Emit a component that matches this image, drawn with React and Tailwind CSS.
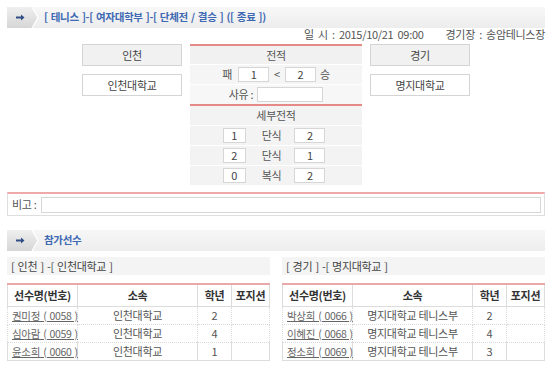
import React from "react";

const FONT = { fontFamily: '"Noto Sans CJK KR", "Noto Sans", sans-serif' };

function SectionHeader({ title }) {
  return (
    <div className="flex h-[21px] items-stretch bg-gradient-to-b from-[#f7f7f7] to-[#ededed]">
      <div className="flex w-[24px] items-center justify-center bg-gradient-to-b from-[#efefef] to-[#d6d6d6]">
        <svg width="9" height="7" viewBox="0 0 9 7" className="ml-[2px]">
          <path d="M0 2.5H5V0.5L8.5 3.5L5 6.5V4.5H0Z" fill="#2f4f86" />
        </svg>
      </div>
      <svg width="8" height="21" viewBox="0 0 8 21" className="block">
        <defs>
          <linearGradient id="tabg" x1="0" y1="0" x2="0" y2="1">
            <stop offset="0" stopColor="#efefef" />
            <stop offset="1" stopColor="#d6d6d6" />
          </linearGradient>
        </defs>
        <polygon points="0,0 1,0 7,10.5 1,21 0,21" fill="url(#tabg)" />
        <polyline points="1,0 7,10.5 1,21" fill="none" stroke="#ffffff" strokeWidth="1.2" />
      </svg>
      <span className="ml-[5px] self-center text-[10.5px] font-bold leading-none text-[#3d68b3] [word-spacing:1px]">
        {title}
      </span>
    </div>
  );
}

function Box({ children, className = "" }) {
  return (
    <span
      className={`inline-flex h-[15px] items-center justify-center border border-[#d6d6d6] bg-white text-[11px] leading-none text-[#444] ${className}`}
    >
      {children}
    </span>
  );
}

function PlayerTable({ rows }) {
  const last = rows.length - 1;
  const rowBorder = (idx) =>
    idx < last ? "border-b border-dotted border-b-[#dadada]" : "border-b border-b-[#dcdcdc]";
  return (
    <table className="mt-[8px] w-full table-fixed border-collapse text-[11px] text-[#555]">
      <colgroup>
        <col className="w-[70px]" />
        <col />
        <col className="w-[34px]" />
        <col className="w-[38px]" />
      </colgroup>
      <thead>
        <tr className="h-[22px] border-t-2 border-t-[#e9a9a9]">
          {["선수명(번호)", "소속", "학년", "포지션"].map((h, i) => (
            <th
              key={h}
              className={`whitespace-nowrap border-b border-r border-[#dcdcdc] p-0 font-bold leading-none text-[#333] ${i === 0 ? "border-l" : ""}`}
            >
              {h}
            </th>
          ))}
        </tr>
      </thead>
      <tbody>
        {rows.map((r, idx) => (
          <tr key={idx} className="h-[18px]">
            <td className={`whitespace-nowrap border-l border-r border-l-[#dcdcdc] border-r-[#dcdcdc] p-0 pl-[4px] leading-[17px] ${rowBorder(idx)}`}>
              <span className="text-[10.5px] text-[#666] underline [word-spacing:1px]">{r[0]}</span>
            </td>
            <td className={`whitespace-nowrap border-r border-r-[#dcdcdc] p-0 text-center leading-[17px] ${rowBorder(idx)}`}>
              {r[1]}
            </td>
            <td className={`border-r border-r-[#dcdcdc] p-0 text-center leading-[17px] ${rowBorder(idx)}`}>
              {r[2]}
            </td>
            <td className={`border-r border-r-[#dcdcdc] p-0 ${rowBorder(idx)}`}></td>
          </tr>
        ))}
      </tbody>
    </table>
  );
}

export default function App() {
  return (
    <div
      className="h-[366px] w-[550px] overflow-hidden bg-white pl-[7px] pr-[5px] pt-[7px] tracking-[-0.3px]"
      style={FONT}
    >
      <SectionHeader title="[ 테니스 ]-[ 여자대학부 ]-[ 단체전 / 결승 ] ([ 종료 ])" />

      <div className="flex h-[12px] items-center justify-end gap-[22px] text-[11px] leading-none text-[#555] [word-spacing:2px]">
        <span>일 시 : 2015/10/21 09:00</span>
        <span>경기장 : 송암테니스장</span>
      </div>

      <div className="mt-[4px] flex justify-center gap-[8px]">
        <div className="flex w-[100px] flex-col gap-[8px]">
          <div className="flex h-[22px] items-center justify-center border border-[#d4d4d4] bg-[#f1f1f1] text-[11px] text-[#444]">
            인천
          </div>
          <div className="flex h-[22px] items-center justify-center border border-[#d4d4d4] bg-white text-[11px] text-[#444]">
            인천대학교
          </div>
        </div>

        <div className="flex w-[172px] flex-col text-[11px] text-[#555]">
          <div className="border-y-2 border-[#e58a86]">
            <div className="flex h-[18px] items-center justify-center bg-[#f1f1f1] leading-none">전적</div>
            <div className="flex h-[20px] items-center justify-center border-t border-white bg-[#f5f5f5] leading-none">
              <span className="mr-[6px]">패</span>
              <Box className="w-[31px]">1</Box>
              <span className="mx-[5px]">&lt;</span>
              <Box className="w-[31px]">2</Box>
              <span className="ml-[4px]">승</span>
            </div>
            <div className="flex h-[20px] items-center justify-center border-t border-white bg-[#f7f7f7] leading-none">
              <span className="mr-[4px]">사유 :</span>
              <Box className="w-[66px]"></Box>
            </div>
          </div>
          <div className="flex h-[19px] items-center justify-center bg-[#f3f3f3] leading-none">세부전적</div>
          {[
            ["1", "단식", "2"],
            ["2", "단식", "1"],
            ["0", "복식", "2"],
          ].map((r, i) => (
            <div
              key={i}
              className="flex h-[20px] items-center justify-center border-t border-white bg-[#f3f3f3] pr-[4px] leading-none"
            >
              <Box className="w-[23px]">{r[0]}</Box>
              <span className="ml-[16px] mr-[13px]">{r[1]}</span>
              <Box className="w-[31px]">{r[2]}</Box>
            </div>
          ))}
        </div>

        <div className="flex w-[100px] flex-col gap-[8px]">
          <div className="flex h-[22px] items-center justify-center border border-[#d4d4d4] bg-[#f1f1f1] text-[11px] text-[#444]">
            경기
          </div>
          <div className="flex h-[22px] items-center justify-center border border-[#d4d4d4] bg-white text-[11px] text-[#444]">
            명지대학교
          </div>
        </div>
      </div>

      <div className="mt-[7px] flex h-[24px] items-center border border-t-2 border-[#dedede] border-t-[#eeaaa8] pl-[4px] text-[11px] text-[#555]">
        <span className="mr-[4px] leading-none">비고 :</span>
        <div className="mr-[3px] h-[16px] flex-1 border border-[#d6d6d6] bg-white"></div>
      </div>

      <div className="mt-[14px]">
        <SectionHeader title="참가선수" />
      </div>

      <div className="mt-[6px] flex gap-[12px]">
        <div className="flex-1">
          <div className="flex h-[18px] items-center bg-[#f4f4f4] pl-[4px] text-[11px] leading-none text-[#444] [word-spacing:1px]">
            [ 인천 ] -[ 인천대학교 ]
          </div>
          <PlayerTable
            rows={[
              ["권미정 ( 0058 )", "인천대학교", "2"],
              ["심아람 ( 0059 )", "인천대학교", "4"],
              ["윤소희 ( 0060 )", "인천대학교", "1"],
            ]}
          />
        </div>
        <div className="flex-1">
          <div className="flex h-[18px] items-center bg-[#f4f4f4] pl-[4px] text-[11px] leading-none text-[#444] [word-spacing:1px]">
            [ 경기 ] -[ 명지대학교 ]
          </div>
          <PlayerTable
            rows={[
              ["박상희 ( 0066 )", "명지대학교 테니스부", "2"],
              ["이혜진 ( 0068 )", "명지대학교 테니스부", "4"],
              ["정소희 ( 0069 )", "명지대학교 테니스부", "3"],
            ]}
          />
        </div>
      </div>
    </div>
  );
}
